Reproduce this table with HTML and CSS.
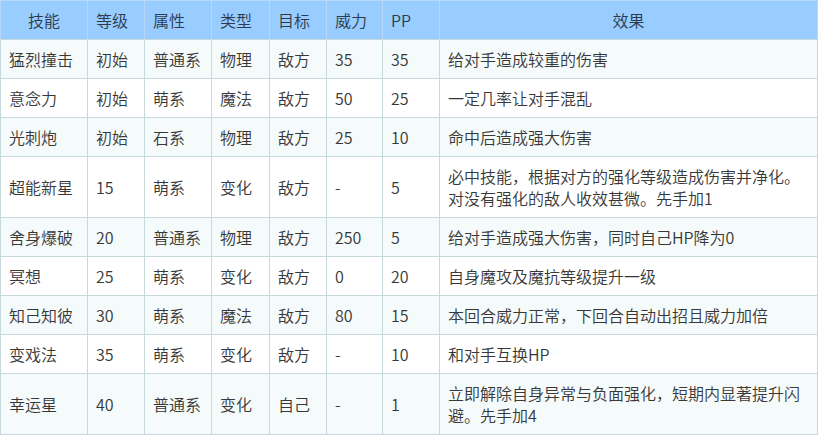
FILE: index.html
```html
<!DOCTYPE html>
<html lang="zh">
<head>
<meta charset="utf-8">
<link rel="stylesheet" href="styles.css">
</head>
<body>
<table class="skills">
  <colgroup>
    <col class="c-name"><col class="c-lv"><col class="c-attr"><col class="c-type"><col class="c-tgt"><col class="c-pow"><col class="c-pp"><col class="c-eff">
  </colgroup>
  <thead>
    <tr>
      <th class="center">技能</th><th>等级</th><th>属性</th><th>类型</th><th>目标</th><th>威力</th><th>PP</th><th class="center">效果</th>
    </tr>
  </thead>
  <tbody>
    <tr><td>猛烈撞击</td><td>初始</td><td>普通系</td><td>物理</td><td>敌方</td><td>35</td><td>35</td><td>给对手造成较重的伤害</td></tr>
    <tr><td>意念力</td><td>初始</td><td>萌系</td><td>魔法</td><td>敌方</td><td>50</td><td>25</td><td>一定几率让对手混乱</td></tr>
    <tr><td>光刺炮</td><td>初始</td><td>石系</td><td>物理</td><td>敌方</td><td>25</td><td>10</td><td>命中后造成强大伤害</td></tr>
    <tr><td>超能新星</td><td>15</td><td>萌系</td><td>变化</td><td>敌方</td><td>-</td><td>5</td><td>必中技能，根据对方的强化等级造成伤害并净化。对没有强化的敌人收效甚微。先手加1</td></tr>
    <tr><td>舍身爆破</td><td>20</td><td>普通系</td><td>物理</td><td>敌方</td><td>250</td><td>5</td><td>给对手造成强大伤害，同时自己HP降为0</td></tr>
    <tr><td>冥想</td><td>25</td><td>萌系</td><td>变化</td><td>敌方</td><td>0</td><td>20</td><td>自身魔攻及魔抗等级提升一级</td></tr>
    <tr><td>知己知彼</td><td>30</td><td>萌系</td><td>魔法</td><td>敌方</td><td>80</td><td>15</td><td>本回合威力正常，下回合自动出招且威力加倍</td></tr>
    <tr><td>变戏法</td><td>35</td><td>萌系</td><td>变化</td><td>敌方</td><td>-</td><td>10</td><td>和对手互换HP</td></tr>
    <tr><td>幸运星</td><td>40</td><td>普通系</td><td>变化</td><td>自己</td><td>-</td><td>1</td><td>立即解除自身异常与负面强化，短期内显著提升闪避。先手加4</td></tr>
  </tbody>
</table>
</body>
</html>
```
FILE: styles.css
```css
html, body {
  margin: 0;
  padding: 0;
  background: #ffffff;
}
.skills {
  width: 818px;
  border-collapse: collapse;
  table-layout: fixed;
  font-family: "Noto Sans CJK SC", "Microsoft YaHei", sans-serif;
  font-size: 16px;
  font-weight: 350;
  line-height: 22px;
  color: #383838;
}
.c-name { width: 87px; }
.c-lv { width: 57px; }
.c-attr { width: 67px; }
.c-type { width: 58px; }
.c-tgt { width: 57px; }
.c-pow { width: 56px; }
.c-pp { width: 57px; }
.skills th,
.skills td {
  padding: 8px 8px;
  text-align: left;
  vertical-align: middle;
  font-weight: 350;
  border: 1px solid #c6d9dd;
}
.skills th {
  background: #99ccff;
  color: #2b3a4d;
  border-color: #b5d8fb;
  border-bottom-color: #c6d9dd;
}
.skills th.center {
  text-align: center;
}
.skills tbody tr:nth-child(odd) td {
  background: #f5fafa;
}
```
